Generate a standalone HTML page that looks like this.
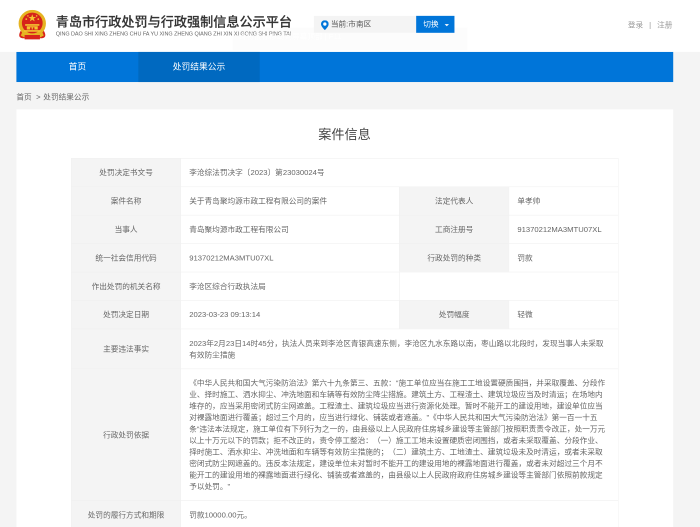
<!DOCTYPE html>
<html lang="zh-CN">
<head>
<meta charset="utf-8">
<title>案件信息</title>
<style>
html,body{margin:0;padding:0;width:700px;height:527px;overflow:hidden;background:#f4f4f4}
#b{position:absolute;left:0;top:0;width:700px;height:527px;overflow:hidden;filter:blur(.3px)}
#s{position:absolute;left:0;top:0;width:1280px;height:964px;transform:scale(.546875);transform-origin:0 0;background:#f4f4f4;font-family:"Liberation Sans","Noto Sans CJK SC",sans-serif;font-size:14px;color:#666;overflow:hidden;text-spacing-trim:space-all}
.a{position:absolute;white-space:nowrap}
.c{position:absolute;box-sizing:border-box;border:1px solid #f0f0f0;background:#fff;line-height:21px;padding:15px;white-space:nowrap}
.l{background:#f4f4f4;text-align:center;padding:15px 0}
</style>
</head>
<body>
<div id="b"><div id="s">
<div class="a" style="left:0;top:0;width:1280px;height:95px;background:#fff"></div>
<svg class="a" style="left:33px;top:18px" width="52" height="56" viewBox="0 0 52 56">
<path d="M5 38 Q-2 50 8 52 L44 52 Q54 50 47 38Z" fill="#d8261c"/>
<circle cx="26" cy="25" r="25" fill="#e6b422"/>
<circle cx="26" cy="24" r="19" fill="#d6241a"/>
<path d="M8 40 Q26 56 44 40 L47 47 Q26 60 5 47Z" fill="#e6b422"/>
<polygon points="26,8 27.8,13 33,13 28.8,16 30.4,21 26,18 21.6,21 23.2,16 19,13 24.2,13" fill="#f4c430"/>
<circle cx="15" cy="17" r="1.6" fill="#f4c430"/><circle cx="37" cy="17" r="1.6" fill="#f4c430"/><circle cx="18" cy="11" r="1.4" fill="#f4c430"/><circle cx="34" cy="11" r="1.4" fill="#f4c430"/>
<path d="M13 26H39V29H13ZM16 30H36V36H16ZM11 37H41V40H11Z" fill="#f4c430"/>
<path d="M22 32H25V36H22ZM27 32H30V36H27Z" fill="#d6241a"/>
<path d="M12 46H40V54H12Z" fill="#d8261c"/>
</svg>
<div class="a" style="left:102px;top:23px;font-size:24px;line-height:36px;color:#333;font-weight:500;-webkit-text-stroke:.3px #333">青岛市行政处罚与行政强制信息公示平台</div>
<div class="a" style="left:102px;top:56px;font-size:10px;line-height:14px;color:#666;letter-spacing:-.09px">QING DAO SHI XING ZHENG CHU FA YU XING ZHENG QIANG ZHI XIN XI GONG SHI PING TAI</div>
<div class="a" style="left:425px;top:50px;width:430px;height:42px;background:rgba(0,0,0,.012)"></div>
<div class="a" style="left:436px;top:54px;color:rgba(255,255,255,.8);line-height:24px;font-size:14px">请将鼠标移动到屏幕顶部 | F11</div>
<div class="a" style="left:574px;top:29px;width:188px;height:31px;background:#f4f4f4"></div>
<svg class="a" style="left:587px;top:37px" width="14" height="18" viewBox="0 0 14 18"><path d="M7 0C3 0 0 3 0 7c0 4.500 7 11 7 11s7-6.500 7-11c0-4-3-7-7-7Z" fill="#0075d9"/><circle cx="7" cy="7" r="3" fill="#fff"/></svg>
<div class="a" style="left:605px;top:33px;line-height:21px;color:#555">当前:市南区</div>
<div class="a" style="left:761px;top:29px;width:70px;height:31px;background:#0075d9;color:#fff;line-height:29px;text-indent:13px">切换<span style="position:absolute;left:52px;top:15px;width:0;height:0;border:4px solid transparent;border-top:4px solid #fff;border-bottom:0"></span></div>
<div class="a" style="left:1148px;top:35px;line-height:21px;color:#999">登录<span style="margin:0 11px">|</span>注册</div>

<div class="a" style="left:30px;top:95px;width:1201px;height:55px;background:#0075d9"></div>
<div class="a" style="left:253px;top:95px;width:222px;height:55px;background:#0069c0"></div>
<div class="a" style="left:30px;top:95px;width:223px;height:55px;line-height:55px;text-align:center;color:#fff;font-size:16px">首页</div>
<div class="a" style="left:253px;top:95px;width:222px;height:55px;line-height:55px;text-align:center;color:#fff;font-size:16px">处罚结果公示</div>

<div class="a" style="left:30px;top:167px;line-height:21px;color:#666">首页<span style="margin:0 5px 0 8px">&gt;</span>处罚结果公示</div>

<div class="a" style="left:30px;top:200px;width:1201px;height:764px;background:#fff"></div>
<div class="a" style="left:30px;top:229px;width:1200px;line-height:36px;font-size:24px;text-align:center;color:#444">案件信息</div>

<div class="c l" style="left:130px;top:289px;width:201px;height:53px">处罚决定书文号</div>
<div class="c" style="left:330px;top:289px;width:801px;height:53px">李沧综法罚决字〔2023〕第23030024号</div>

<div class="c l" style="left:130px;top:341px;width:201px;height:53px">案件名称</div>
<div class="c" style="left:330px;top:341px;width:401px;height:53px">关于青岛聚均源市政工程有限公司的案件</div>
<div class="c l" style="left:730px;top:341px;width:201px;height:53px">法定代表人</div>
<div class="c" style="left:930px;top:341px;width:201px;height:53px">单孝帅</div>

<div class="c l" style="left:130px;top:393px;width:201px;height:53px">当事人</div>
<div class="c" style="left:330px;top:393px;width:401px;height:53px">青岛聚均源市政工程有限公司</div>
<div class="c l" style="left:730px;top:393px;width:201px;height:53px">工商注册号</div>
<div class="c" style="left:930px;top:393px;width:201px;height:53px">91370212MA3MTU07XL</div>

<div class="c l" style="left:130px;top:445px;width:201px;height:53px">统一社会信用代码</div>
<div class="c" style="left:330px;top:445px;width:401px;height:53px">91370212MA3MTU07XL</div>
<div class="c l" style="left:730px;top:445px;width:201px;height:53px">行政处罚的种类</div>
<div class="c" style="left:930px;top:445px;width:201px;height:53px">罚款</div>

<div class="c l" style="left:130px;top:497px;width:201px;height:53px">作出处罚的机关名称</div>
<div class="c" style="left:330px;top:497px;width:401px;height:53px">李沧区综合行政执法局</div>
<div class="c" style="left:730px;top:497px;width:401px;height:53px"></div>

<div class="c l" style="left:130px;top:549px;width:201px;height:53px">处罚决定日期</div>
<div class="c" style="left:330px;top:549px;width:401px;height:53px">2023-03-23 09:13:14</div>
<div class="c l" style="left:730px;top:549px;width:201px;height:53px">处罚幅度</div>
<div class="c" style="left:930px;top:549px;width:201px;height:53px">轻微</div>

<div class="c l" style="left:130px;top:601px;width:201px;height:74px;line-height:72px;padding:0">主要违法事实</div>
<div class="c" style="left:330px;top:601px;width:801px;height:74px;padding-top:16px">2023年2月23日14时45分，执法人员来到李沧区青银高速东侧，李沧区九水东路以南，枣山路以北段时，发现当事人未采取<br>有效防尘措施</div>

<div class="c l" style="left:130px;top:674px;width:201px;height:242px;line-height:240px;padding:0">行政处罚依据</div>
<div class="c" style="left:330px;top:674px;width:801px;height:242px">《中华人民共和国大气污染防治法》第六十九条第三、五款：“施工单位应当在施工工地设置硬质围挡，并采取覆盖、分段作<br>业、择时施工、洒水抑尘、冲洗地面和车辆等有效防尘降尘措施。建筑土方、工程渣土、建筑垃圾应当及时清运；在场地内<br>堆存的，应当采用密闭式防尘网遮盖。工程渣土、建筑垃圾应当进行资源化处理。暂时不能开工的建设用地，建设单位应当<br>对裸露地面进行覆盖；超过三个月的，应当进行绿化、铺装或者遮盖。”《中华人民共和国大气污染防治法》第一百一十五<br>条“违法本法规定，施工单位有下列行为之一的，由县级以上人民政府住房城乡建设等主管部门按照职责责令改正，处一万元<br>以上十万元以下的罚款；拒不改正的，责令停工整治：（一）施工工地未设置硬质密闭围挡，或者未采取覆盖、分段作业、<br>择时施工、洒水抑尘、冲洗地面和车辆等有效防尘措施的；（二）建筑土方、工地渣土、建筑垃圾未及时清运，或者未采取<br>密闭式防尘网遮盖的。违反本法规定，建设单位未对暂时不能开工的建设用地的裸露地面进行覆盖，或者未对超过三个月不<br>能开工的建设用地的裸露地面进行绿化、铺装或者遮盖的，由县级以上人民政府政府住房城乡建设等主管部门依照前款规定<br>予以处罚。”</div>

<div class="c l" style="left:130px;top:915px;width:201px;height:60px">处罚的履行方式和期限</div>
<div class="c" style="left:330px;top:915px;width:801px;height:60px">罚款10000.00元。</div>
</div></div>
</body>
</html>
